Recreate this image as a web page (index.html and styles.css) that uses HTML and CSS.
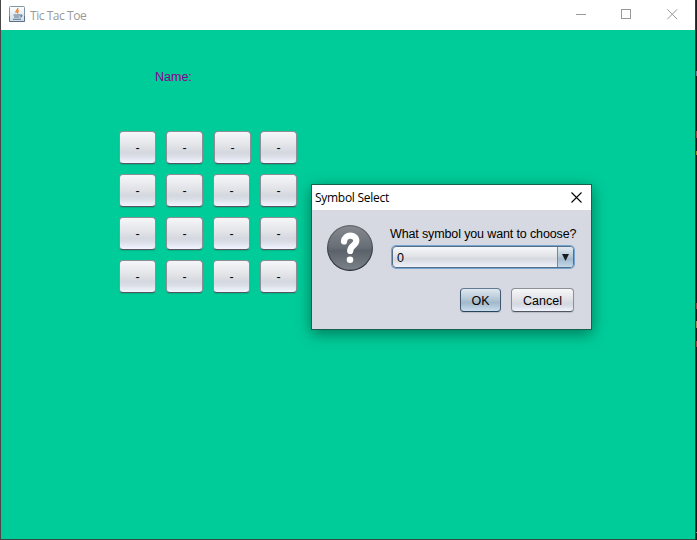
FILE: index.html
```html
<!DOCTYPE html>
<html lang="en">
<head>
<meta charset="utf-8">
<title>Tic Tac Toe</title>
<link rel="stylesheet" href="styles.css">
</head>
<body>
<main class="window">
  <header class="titlebar">
    <svg class="java" width="16" height="16" viewBox="0 0 16 16" fill="none">
      <defs><linearGradient id="tile" x2="0" y2="1"><stop stop-color="#fff"/><stop offset="1" stop-color="#cfdbe4"/></linearGradient></defs>
      <rect x=".5" y=".5" width="15" height="15" rx="1" fill="url(#tile)" stroke="#8095a6"/>
      <path d="M.5 10V15.5H15.5V10" stroke="#587087"/>
      <path d="M8.700 2c1 2-3 2.600-1.500 5M10 4.500C8 5.500 8.500 6.500 9 7.500" stroke="#e8802c" stroke-width="1.300"/>
      <path d="M4.500 9h6.500M5 11h5.500M4 13.300h8M11 9.300c2.500-1 2.500 1.200.2 2" stroke="#52718c" stroke-width="1.100"/>
    </svg>
    <span class="caption">Tic Tac Toe</span>
    <svg class="controls" width="102" height="11" viewBox="0 0 102 11" fill="none" stroke="#999">
      <path d="M0 5.500H10"/><rect x="45.500" y=".5" width="9" height="9"/><path d="M91.300.3l9.900 9.900M101.200.3l-9.900 9.900"/>
    </svg>
  </header>
  <section class="content">
    <div class="name">Name:</div>
    <div class="board">
      <button>-</button><button>-</button><button class="shifted">-</button><button>-</button>
      <button>-</button><button>-</button><button>-</button><button>-</button>
      <button>-</button><button>-</button><button>-</button><button>-</button>
      <button>-</button><button>-</button><button>-</button><button>-</button>
    </div>
  </section>
</main>
<aside class="edge"></aside>
<section class="dialog">
  <header class="dialog-title">
    <span>Symbol Select</span>
    <svg width="11" height="11" viewBox="0 0 11 11" stroke="#000" stroke-width="1.100"><path d="M.5.5l10 10M10.500.5l-10 10"/></svg>
  </header>
  <div class="dialog-body">
    <svg class="question" width="46" height="46" viewBox="0 0 46 46" fill="none">
      <defs>
        <linearGradient id="disc" x2="0" y2="1"><stop stop-color="#858a90"/><stop offset=".48" stop-color="#686e75"/><stop offset=".56" stop-color="#5b6269"/><stop offset="1" stop-color="#7b828b"/></linearGradient>
        <linearGradient id="rim" x2="0" y2="1"><stop stop-color="#65696e"/><stop offset="1" stop-color="#252b32"/></linearGradient>
      </defs>
      <circle cx="23" cy="23" r="22.400" fill="url(#disc)" stroke="url(#rim)" stroke-width="1.200"/>
      <path d="M17 16.500C17.500 8.800 29.300 9 29.300 15.800C29.300 20.500 23.200 20.300 23.200 26" stroke="#fff" stroke-width="6.200" stroke-linecap="round"/>
      <circle cx="23" cy="34.800" r="3.300" fill="#fff"/>
    </svg>
    <div class="form">
      <label class="prompt">What symbol you want to choose?</label>
      <div class="combo"><span>0</span><i><svg width="7" height="7" viewBox="0 0 7 7"><path d="M0 0h7L3.500 7z" fill="#151b20"/></svg></i></div>
      <div class="actions"><button class="ok">OK</button><button class="cancel">Cancel</button></div>
    </div>
  </div>
</section>
</body>
</html>
```
FILE: styles.css
```css
* { box-sizing: border-box; }
body {
  margin: 0;
  width: 697px;
  height: 540px;
  display: flex;
  overflow: hidden;
  font: 12.5px "Liberation Sans", sans-serif;
}
.window {
  width: 695px;
  height: 540px;
  border-left: 1px solid #484848;
  border-bottom: 1px solid #304b43;
  background: #00cc99;
}
.edge {
  width: 2px;
  border-left: 1px solid #35393a;
  background: linear-gradient(#202124 0 71px, #777b9b 71px 76px, #17181b 76px 131px, #a7383c 131px 138px, #17181b 138px 151px, #a78120 151px 155px, #17181b 155px 303px, #a7383c 303px 309px, #17181b 309px 321px, #a58958 321px 328px, #17181b 328px 341px, #a7383c 341px 347px, #17181b 347px 532px, #888 532px 533px, #17181b 533px);
}
.titlebar {
  display: flex;
  height: 30px;
  padding: 0 17px 0 8px;
  align-items: center;
  background: #fff;
}
.java { margin-top: -2px; }
.caption {
  margin: 0 0 0 5px;
  color: #999;
  font: 12px "Open Sans", sans-serif;
  letter-spacing: -.45px;
}
.controls { margin: -1px 0 0 auto; }
.content { padding: 40px 0 0 118px; }
.name {
  height: 61px;
  padding-left: 36px;
  color: #8c008c;
  line-height: 14px;
}
.board {
  display: grid;
  grid-template-columns: repeat(4, 37px);
  grid-auto-rows: 33px;
  gap: 10px;
}
button {
  padding: 0;
  border: 1px solid #8b9097;
  border-bottom-color: #52575f;
  border-radius: 4px;
  background: linear-gradient(#f6f7f9, #e1e3e7 45%, #d5d8df 65%, #d8dce5 76%, #f2f5ff);
  color: #000;
  font: 12.5px "Liberation Sans", sans-serif;
  box-shadow: 0 1px 1px #0002;
}
.shifted { margin: 0 -1px 0 1px; }
.dialog {
  position: absolute;
  left: 311px;
  top: 184px;
  width: 281px;
  height: 146px;
  border: 1px solid #17604d;
  background: #d6d9e1;
  box-shadow: 0 4px 14px #0006;
}
.dialog-title {
  display: flex;
  height: 25px;
  padding: 0 9px 1px 3px;
  align-items: center;
  justify-content: space-between;
  background: #fff;
  font: 12px "Open Sans", sans-serif;
  letter-spacing: -.28px;
}
.dialog-body { display: flex; padding: 15px 16px 0 15px; }
.question { flex: none; }
.form { width: 186px; margin-left: 17px; }
.prompt {
  display: block;
  height: 21px;
  line-height: 18px;
  letter-spacing: -.13px;
  white-space: nowrap;
}
.combo {
  display: flex;
  width: 182px;
  height: 22px;
  margin-left: 2px;
  border: 1px solid #536f89;
  border-radius: 4px;
  box-shadow: 0 0 0 1px #73a4d1;
  background: linear-gradient(#f6f7f9, #e1e3e7 45%, #d5d8df 60%, #f0f2f8);
  line-height: 22px;
  overflow: hidden;
}
.combo span { flex: 1; padding-left: 4px; }
.combo i {
  display: flex;
  width: 16px;
  align-items: center;
  justify-content: center;
  border-left: 1px solid #71899e;
  background: linear-gradient(#e2eaf1, #b5c7d6 48%, #a3bace 60%, #c3d8e8);
}
.actions { display: flex; margin-top: 20px; padding-right: 2px; justify-content: flex-end; gap: 10px; }
.actions button { height: 24px; padding-top: 1px; }
.cancel { width: 63px; }
.actions .ok {
  width: 41px;
  border-color: #627b92 #3f5870 #29435b;
  background: linear-gradient(#dfe8ef, #b6c8d6 45%, #a2b9cb 62%, #c8dcec);
}
```
